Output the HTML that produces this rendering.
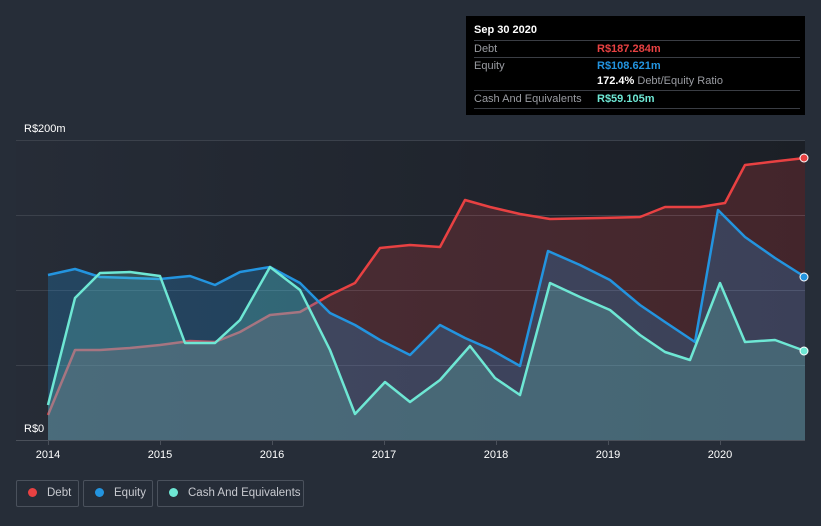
<!DOCTYPE html>
<html><head><meta charset="utf-8"><style>
body{margin:0;width:821px;height:526px;background:#262d38;font-family:"Liberation Sans",sans-serif;overflow:hidden;position:relative}
.tt{position:absolute;left:466px;top:16px;width:339px;height:99px;background:#000;color:#fff;font-size:11px}
.row{position:absolute;left:8px;right:5px;border-top:1px solid #3a3d44;height:16px}
.lab{position:absolute;left:0;top:2px;color:#9a9ca2}
.val{position:absolute;left:123px;top:2px;font-weight:bold;white-space:nowrap}
.leg{position:absolute;top:480px;height:27px;border:1px solid #4a515c;border-radius:2px;color:#c8cad0;font-size:11.5px;line-height:25px;box-sizing:border-box;white-space:nowrap}
.dot{display:inline-block;width:9px;height:9px;border-radius:50%;margin:0 10px 0 11px;vertical-align:-1px}
</style></head><body>
<svg width="821" height="526" style="position:absolute;left:0;top:0">
<defs>
<linearGradient id="bg" x1="0" x2="1" y1="0" y2="0"><stop offset="0" stop-color="#262c37"/><stop offset="1" stop-color="#1b1f26"/></linearGradient>
</defs>
<rect x="16" y="140" width="789" height="300" fill="url(#bg)"/>
<g stroke="#3b414b" stroke-width="1"><line x1="16" y1="140.5" x2="805" y2="140.5"/><line x1="16" y1="215.5" x2="805" y2="215.5"/><line x1="16" y1="290.5" x2="805" y2="290.5"/><line x1="16" y1="365.5" x2="805" y2="365.5"/></g>
<line x1="16" y1="440.5" x2="805" y2="440.5" stroke="#4a505a"/>
<g stroke="#4a505a"><line x1="48.5" y1="440" x2="48.5" y2="445"/><line x1="160.5" y1="440" x2="160.5" y2="445"/><line x1="272.5" y1="440" x2="272.5" y2="445"/><line x1="384.5" y1="440" x2="384.5" y2="445"/><line x1="496.5" y1="440" x2="496.5" y2="445"/><line x1="608.5" y1="440" x2="608.5" y2="445"/><line x1="720.5" y1="440" x2="720.5" y2="445"/></g>
<g fill="none" stroke-width="2.5" stroke-linejoin="round">
<polygon stroke="none" fill="#e84142" fill-opacity="0.2" points="48,415 75,350 100,350 130,348 160,345 190,341 215,342 240,332 270,315 300,312 330,295 355,283 380,248 410,245 440,247 465,200 490,207 520,214 550,219 600,218 640,217 665,207 700,207 725,203 745,165 770,162 805,158 805,440 48,440"/>
<polyline stroke="#e84142" points="48,415 75,350 100,350 130,348 160,345 190,341 215,342 240,332 270,315 300,312 330,295 355,283 380,248 410,245 440,247 465,200 490,207 520,214 550,219 600,218 640,217 665,207 700,207 725,203 745,165 770,162 805,158"/>
<polygon stroke="none" fill="#2394df" fill-opacity="0.25" points="48,275 75,269 100,277 130,278 160,279 190,276 215,285 240,272 270,267 300,283 330,313 355,325 380,340 410,355 440,325 465,338 490,349 520,366 548,251 580,265 610,280 640,305 665,322 695,342 718,210 745,237 775,258 805,277 805,440 48,440"/>
<polyline stroke="#2394df" points="48,275 75,269 100,277 130,278 160,279 190,276 215,285 240,272 270,267 300,283 330,313 355,325 380,340 410,355 440,325 465,338 490,349 520,366 548,251 580,265 610,280 640,305 665,322 695,342 718,210 745,237 775,258 805,277"/>
<polygon stroke="none" fill="#6ee7d4" fill-opacity="0.22" points="48,405 75,298 100,273 130,272 160,276 185,343 215,343 240,320 270,267 300,290 330,350 355,414 385,382 410,402 440,380 470,346 495,378 520,395 550,283 580,297 610,310 640,335 665,352 690,360 720,283 745,342 775,340 805,351 805,440 48,440"/>
<polyline stroke="#6ee7d4" points="48,405 75,298 100,273 130,272 160,276 185,343 215,343 240,320 270,267 300,290 330,350 355,414 385,382 410,402 440,380 470,346 495,378 520,395 550,283 580,297 610,310 640,335 665,352 690,360 720,283 745,342 775,340 805,351"/>
</g>
<circle cx="804" cy="158" r="4" fill="#e84142" stroke="#fff" stroke-width="1"/>
<circle cx="804" cy="277" r="4" fill="#2394df" stroke="#fff" stroke-width="1"/>
<circle cx="804" cy="351" r="4" fill="#6ee7d4" stroke="#fff" stroke-width="1"/>
<g fill="#fff" font-size="11" font-family="Liberation Sans,sans-serif">
<text x="24" y="132">R$200m</text><text x="24" y="432">R$0</text>
<g text-anchor="middle"><text x="48" y="458">2014</text><text x="160" y="458">2015</text><text x="272" y="458">2016</text><text x="384" y="458">2017</text><text x="496" y="458">2018</text><text x="608" y="458">2019</text><text x="720" y="458">2020</text></g>
</g>
</svg>
<div class="tt">
<div style="position:absolute;left:8px;top:8px;font-weight:bold">Sep 30 2020</div>
<div class="row" style="top:24px"><span class="lab">Debt</span><span class="val" style="color:#e84142">R$187.284m</span></div>
<div class="row" style="top:41px"><span class="lab">Equity</span><span class="val" style="color:#2394df">R$108.621m</span></div>
<div class="row" style="top:57px;border-top:none"><span class="val" style="color:#fff">172.4% <span style="color:#9a9ca2;font-weight:normal">Debt/Equity Ratio</span></span></div>
<div class="row" style="top:74px;height:17px;border-bottom:1px solid #3a3d44"><span class="lab">Cash And Equivalents</span><span class="val" style="color:#6ee7d4">R$59.105m</span></div>
</div>
<div class="leg" style="left:16px;width:63px"><span class="dot" style="background:#e84142"></span>Debt</div>
<div class="leg" style="left:83px;width:70px"><span class="dot" style="background:#2394df"></span>Equity</div>
<div class="leg" style="left:157px;width:147px"><span class="dot" style="background:#6ee7d4"></span>Cash And Equivalents</div>
</body></html>
